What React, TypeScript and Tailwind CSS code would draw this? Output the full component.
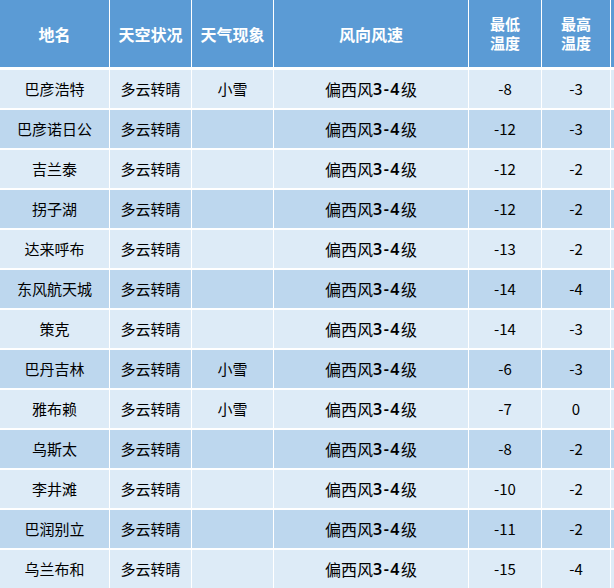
import React from 'react';

type Row = {
    name: string;
    sky: string;
    weather: string;
    wind: string;
    low: string;
    high: string;
};

const rows: Row[] = [
    { name: '巴彦浩特', sky: '多云转晴', weather: '小雪', wind: '3-4', low: '-8', high: '-3' },
    { name: '巴彦诺日公', sky: '多云转晴', weather: '', wind: '3-4', low: '-12', high: '-3' },
    { name: '吉兰泰', sky: '多云转晴', weather: '', wind: '3-4', low: '-12', high: '-2' },
    { name: '拐子湖', sky: '多云转晴', weather: '', wind: '3-4', low: '-12', high: '-2' },
    { name: '达来呼布', sky: '多云转晴', weather: '', wind: '3-4', low: '-13', high: '-2' },
    { name: '东风航天城', sky: '多云转晴', weather: '', wind: '3-4', low: '-14', high: '-4' },
    { name: '策克', sky: '多云转晴', weather: '', wind: '3-4', low: '-14', high: '-3' },
    { name: '巴丹吉林', sky: '多云转晴', weather: '小雪', wind: '3-4', low: '-6', high: '-3' },
    { name: '雅布赖', sky: '多云转晴', weather: '小雪', wind: '3-4', low: '-7', high: '0' },
    { name: '乌斯太', sky: '多云转晴', weather: '', wind: '3-4', low: '-8', high: '-2' },
    { name: '李井滩', sky: '多云转晴', weather: '', wind: '3-4', low: '-10', high: '-2' },
    { name: '巴润别立', sky: '多云转晴', weather: '', wind: '3-4', low: '-11', high: '-2' },
    { name: '乌兰布和', sky: '多云转晴', weather: '', wind: '3-4', low: '-15', high: '-4' },
];

const cols = 'grid grid-cols-[109px_81px_81px_194px_72px_68px_3px] gap-x-px';
const font = { fontFamily: '"Noto Sans CJK SC", "Noto Sans", sans-serif' };

const App: React.FC = () => {
    return (
        <div className="w-[614px] h-[588px] bg-white overflow-hidden" style={font}>
            {/* header */}
            <div className={`${cols} h-[67px] text-white font-bold text-[16px]`}>
                <div className="bg-[#5b9bd5] flex items-center justify-center">地名</div>
                <div className="bg-[#5b9bd5] flex items-center justify-center">天空状况</div>
                <div className="bg-[#5b9bd5] flex items-center justify-center">天气现象</div>
                <div className="bg-[#5b9bd5] flex items-center justify-center">风向风速</div>
                <div className="bg-[#5b9bd5] flex flex-col items-center justify-center gap-[1px] text-[15px] leading-[18px]">
                    <span>最低</span>
                    <span>温度</span>
                </div>
                <div className="bg-[#5b9bd5] flex flex-col items-center justify-center gap-[1px] text-[15px] leading-[18px]">
                    <span>最高</span>
                    <span>温度</span>
                </div>
                <div className="bg-[#5b9bd5]" />
            </div>

            <div className="mt-[3px] flex flex-col gap-y-[2px]">
                {rows.map((r, i) => {
                    const bg = i % 2 === 0 ? 'bg-[#ddebf7]' : 'bg-[#bdd7ee]';
                    return (
                        <div key={r.name} className={`${cols} h-[38px] text-[15px] text-black`}>
                            <div className={`${bg} flex items-center justify-center`}>{r.name}</div>
                            <div className={`${bg} flex items-center justify-center`}>{r.sky}</div>
                            <div className={`${bg} flex items-center justify-center`}>{r.weather}</div>
                            <div className={`${bg} flex items-center justify-center text-[16px]`}>
                                偏西风<span className="font-semibold tracking-[1.5px]" style={{ fontFamily: '"Noto Sans", sans-serif' }}>{r.wind}</span>级
                            </div>
                            <div className={`${bg} flex items-center justify-center`}>{r.low}</div>
                            <div className={`${bg} flex items-center justify-center`}>{r.high}</div>
                            <div className={bg} />
                        </div>
                    );
                })}
            </div>
        </div>
    );
};

export default App;
